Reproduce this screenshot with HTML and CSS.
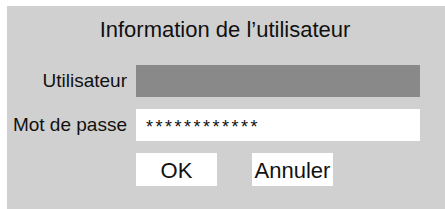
FILE: index.html
```html
<!DOCTYPE html>
<html lang="fr">
<head>
<meta charset="utf-8">
<link rel="stylesheet" href="styles.css">
</head>
<body>
<div class="panel">
  <div class="title">Information de l’utilisateur</div>
  <div class="form">
    <label class="label">Utilisateur</label>
    <div class="field field-disabled"></div>
    <label class="label">Mot de passe</label>
    <div class="field field-password">************</div>
    <div></div>
    <div class="buttons">
      <div class="btn">OK</div>
      <div class="btn">Annuler</div>
    </div>
  </div>
</div>
</body>
</html>
```
FILE: styles.css
```css
html, body {
  margin: 0;
  padding: 0;
  background: #ffffff;
}
body {
  font-family: "Liberation Sans", Arial, sans-serif;
  color: #111111;
}
.panel {
  margin: 6px 0 0 7px;
  height: 203px;
  background: #d0d0d0;
  padding-top: 11px;
  box-sizing: border-box;
}
.title {
  font-size: 22px;
  text-align: center;
  line-height: 25px;
  padding-right: 2px;
}
.form {
  margin-top: 23px;
  display: grid;
  grid-template-columns: 120px 284px;
  column-gap: 9px;
  row-gap: 12px;
  align-items: center;
}
.label {
  font-size: 19px;
  text-align: right;
  white-space: nowrap;
}
.field {
  height: 32px;
  box-sizing: border-box;
}
.field-disabled {
  background: #898989;
}
.field-password {
  background: #ffffff;
  font-size: 18px;
  letter-spacing: 2.5px;
  padding-left: 10px;
  line-height: 36px;
}
.buttons {
  display: flex;
  gap: 35px;
}
.btn {
  width: 81px;
  height: 33px;
  background: #ffffff;
  font-size: 22px;
  line-height: 36px;
  text-align: center;
}
```
